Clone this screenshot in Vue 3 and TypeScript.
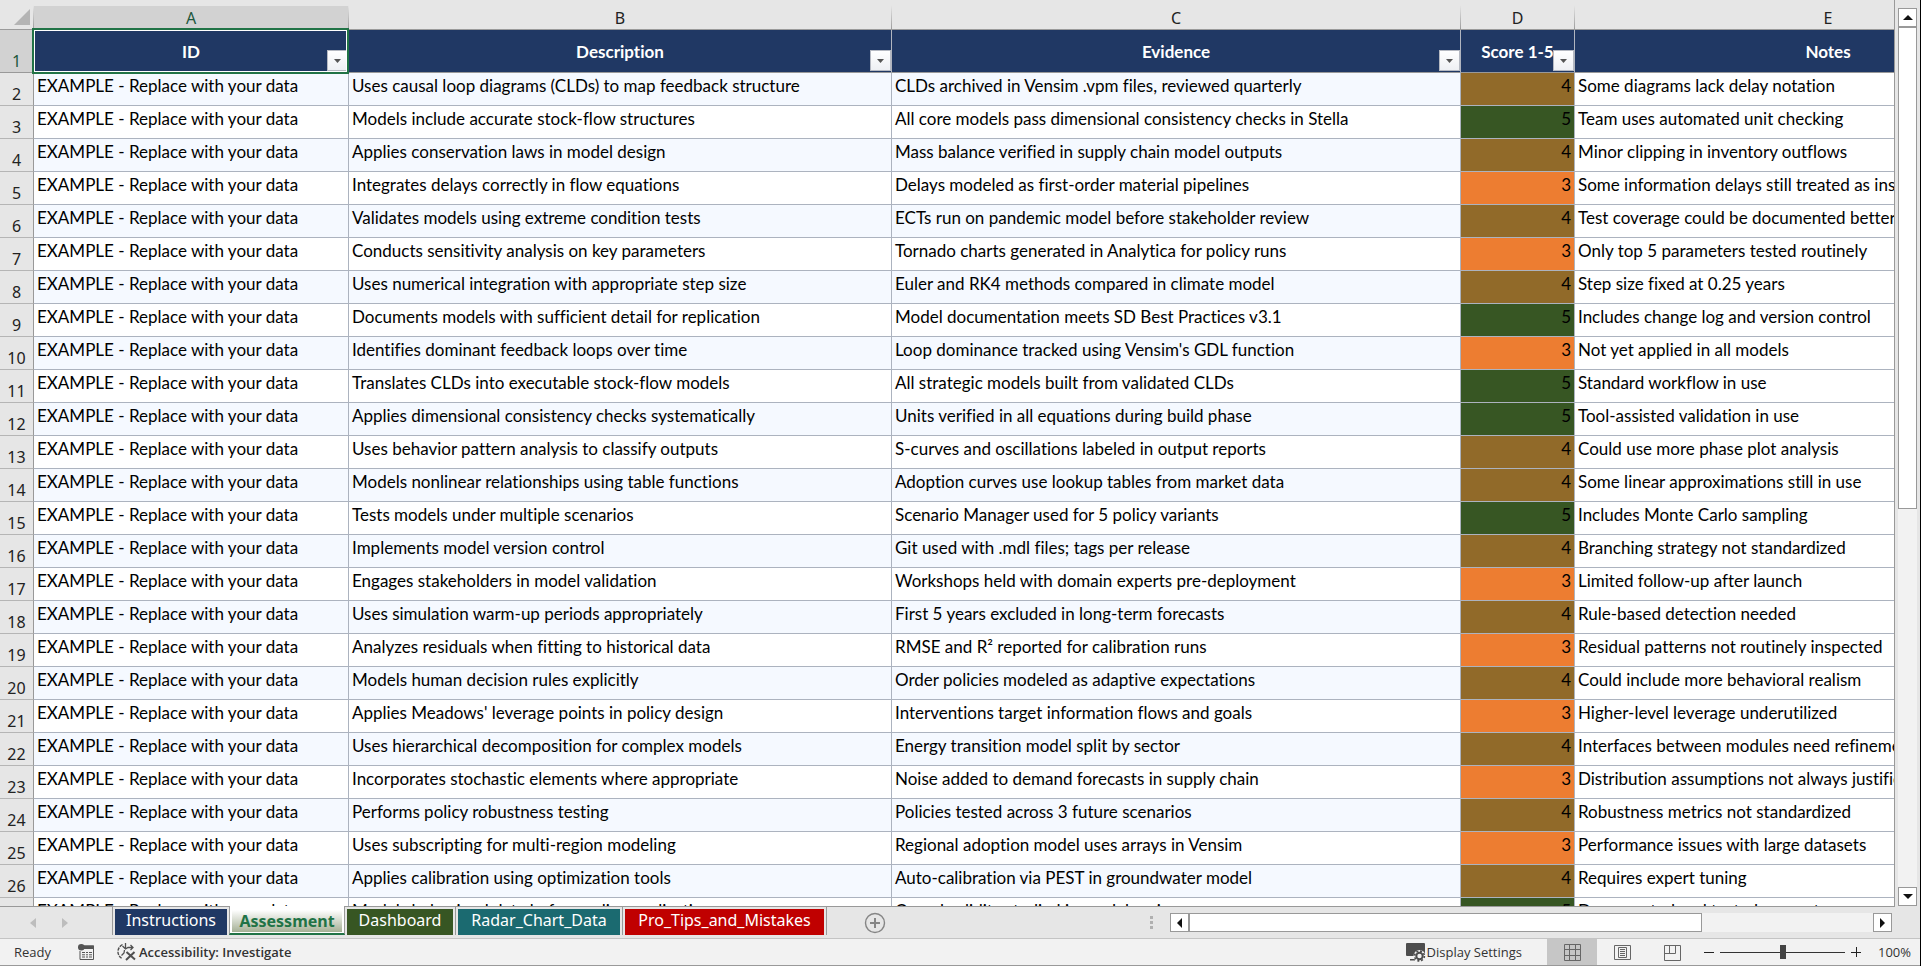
<script setup lang="ts">
interface Row {
  description: string
  evidence: string
  score: number
  notes: string
}

const columns = [
  { letter: 'A', title: 'ID', key: 'a', filter: true },
  { letter: 'B', title: 'Description', key: 'b', filter: true },
  { letter: 'C', title: 'Evidence', key: 'c', filter: true },
  { letter: 'D', title: 'Score 1-5', key: 'd', filter: true },
  { letter: 'E', title: 'Notes', key: 'e', filter: false },
]

const entries: [string, string, number, string][] = [
  ['Uses causal loop diagrams (CLDs) to map feedback structure', 'CLDs archived in Vensim .vpm files, reviewed quarterly', 4, 'Some diagrams lack delay notation'],
  ['Models include accurate stock-flow structures', 'All core models pass dimensional consistency checks in Stella', 5, 'Team uses automated unit checking'],
  ['Applies conservation laws in model design', 'Mass balance verified in supply chain model outputs', 4, 'Minor clipping in inventory outflows'],
  ['Integrates delays correctly in flow equations', 'Delays modeled as first-order material pipelines', 3, 'Some information delays still treated as instantaneous'],
  ['Validates models using extreme condition tests', 'ECTs run on pandemic model before stakeholder review', 4, 'Test coverage could be documented better'],
  ['Conducts sensitivity analysis on key parameters', 'Tornado charts generated in Analytica for policy runs', 3, 'Only top 5 parameters tested routinely'],
  ['Uses numerical integration with appropriate step size', 'Euler and RK4 methods compared in climate model', 4, 'Step size fixed at 0.25 years'],
  ['Documents models with sufficient detail for replication', 'Model documentation meets SD Best Practices v3.1', 5, 'Includes change log and version control'],
  ['Identifies dominant feedback loops over time', "Loop dominance tracked using Vensim's GDL function", 3, 'Not yet applied in all models'],
  ['Translates CLDs into executable stock-flow models', 'All strategic models built from validated CLDs', 5, 'Standard workflow in use'],
  ['Applies dimensional consistency checks systematically', 'Units verified in all equations during build phase', 5, 'Tool-assisted validation in use'],
  ['Uses behavior pattern analysis to classify outputs', 'S-curves and oscillations labeled in output reports', 4, 'Could use more phase plot analysis'],
  ['Models nonlinear relationships using table functions', 'Adoption curves use lookup tables from market data', 4, 'Some linear approximations still in use'],
  ['Tests models under multiple scenarios', 'Scenario Manager used for 5 policy variants', 5, 'Includes Monte Carlo sampling'],
  ['Implements model version control', 'Git used with .mdl files; tags per release', 4, 'Branching strategy not standardized'],
  ['Engages stakeholders in model validation', 'Workshops held with domain experts pre-deployment', 3, 'Limited follow-up after launch'],
  ['Uses simulation warm-up periods appropriately', 'First 5 years excluded in long-term forecasts', 4, 'Rule-based detection needed'],
  ['Analyzes residuals when fitting to historical data', 'RMSE and R² reported for calibration runs', 3, 'Residual patterns not routinely inspected'],
  ['Models human decision rules explicitly', 'Order policies modeled as adaptive expectations', 4, 'Could include more behavioral realism'],
  ["Applies Meadows' leverage points in policy design", 'Interventions target information flows and goals', 3, 'Higher-level leverage underutilized'],
  ['Uses hierarchical decomposition for complex models', 'Energy transition model split by sector', 4, 'Interfaces between modules need refinement'],
  ['Incorporates stochastic elements where appropriate', 'Noise added to demand forecasts in supply chain', 3, 'Distribution assumptions not always justified'],
  ['Performs policy robustness testing', 'Policies tested across 3 future scenarios', 4, 'Robustness metrics not standardized'],
  ['Uses subscripting for multi-region modeling', 'Regional adoption model uses arrays in Vensim', 3, 'Performance issues with large datasets'],
  ['Applies calibration using optimization tools', 'Auto-calibration via PEST in groundwater model', 4, 'Requires expert tuning'],
  ['Models behavioral data before policy application', 'Causal validity studied in model reviews', 5, 'Documented and tested across teams'],
]

const rows: Row[] = entries.map(([description, evidence, score, notes]) => ({ description, evidence, score, notes }))

const tabs = [
  { name: 'Instructions', key: 'navy' },
  { name: 'Assessment', key: 'active' },
  { name: 'Dashboard', key: 'green' },
  { name: 'Radar_Chart_Data', key: 'teal' },
  { name: 'Pro_Tips_and_Mistakes', key: 'red' },
]
</script>

<template>
  <div class="app">
    <main class="workspace">
      <div class="sheet">
        <table class="grid">
          <colgroup>
            <col class="col-head" />
            <col v-for="c in columns" :key="c.key" :class="'col-' + c.key" />
          </colgroup>
          <thead>
            <tr class="letters">
              <th class="corner" aria-label="Select all">
                <svg width="16" height="16" viewBox="0 0 16 16"><path d="M16 0V16H0Z" fill="#b4b4b4" /></svg>
              </th>
              <th v-for="c in columns" :key="c.key" scope="col" :class="{ selected: c.key === 'a' }">{{ c.letter }}</th>
            </tr>
          </thead>
          <tbody>
            <tr class="titles">
              <th scope="row" class="num selected">1</th>
              <td v-for="c in columns" :key="c.key" :class="{ current: c.key === 'a' }">
                <span>{{ c.title }}</span>
                <button v-if="c.filter" type="button" class="filter" :aria-label="'Filter ' + c.title">
                  <svg width="7" height="4" viewBox="0 0 7 4"><path d="M0 0H7L3.5 4Z" fill="#555" /></svg>
                </button>
              </td>
            </tr>
            <tr v-for="(r, i) in rows" :key="i" class="entry" :class="{ tinted: i % 2 === 0 }">
              <th scope="row" class="num">{{ i + 2 }}</th>
              <td class="band">EXAMPLE - Replace with your data</td>
              <td class="band">{{ r.description }}</td>
              <td class="band">{{ r.evidence }}</td>
              <td class="score" :class="'score-' + r.score">{{ r.score }}</td>
              <td>{{ r.notes }}</td>
            </tr>
          </tbody>
        </table>
      </div>
      <div class="vscroll">
        <button type="button" class="arrow" aria-label="Scroll up">
          <svg width="10" height="5" viewBox="0 0 10 5"><path d="M5 0L10 5H0Z" fill="#111" /></svg>
        </button>
        <div class="vtrack"><div class="vthumb"></div></div>
        <button type="button" class="arrow" aria-label="Scroll down">
          <svg width="10" height="5" viewBox="0 0 10 5"><path d="M0 0H10L5 5Z" fill="#111" /></svg>
        </button>
      </div>
    </main>

    <nav class="tabbar">
      <div class="tabnav">
        <button type="button" aria-label="Previous sheet">
          <svg width="6" height="10" viewBox="0 0 6 10"><path d="M6 0V10L0 5Z" fill="#bdbdbd" /></svg>
        </button>
        <button type="button" aria-label="Next sheet">
          <svg width="6" height="10" viewBox="0 0 6 10"><path d="M0 0V10L6 5Z" fill="#bdbdbd" /></svg>
        </button>
      </div>
      <div class="tabs">
        <div v-for="t in tabs" :key="t.key" class="slot" :class="'slot-' + t.key">
          <button type="button" class="tab" :class="'tab-' + t.key">{{ t.name }}</button>
        </div>
      </div>
      <button type="button" class="add" aria-label="New sheet">
        <svg width="22" height="22" viewBox="0 0 22 22" fill="none" stroke="#858585">
          <circle cx="11" cy="11" r="9.5" stroke-width="1.4" />
          <path d="M6 11H16M11 6V16" stroke-width="2" />
        </svg>
      </button>
      <div class="grip"><i></i><i></i><i></i></div>
      <div class="hscroll">
        <button type="button" class="arrow" aria-label="Scroll left">
          <svg width="5" height="10" viewBox="0 0 5 10"><path d="M5 0V10L0 5Z" fill="#111" /></svg>
        </button>
        <div class="htrack"><div class="hthumb"></div></div>
        <button type="button" class="arrow" aria-label="Scroll right">
          <svg width="5" height="10" viewBox="0 0 5 10"><path d="M0 0V10L5 5Z" fill="#111" /></svg>
        </button>
      </div>
    </nav>

    <footer class="status">
      <span class="ready">Ready</span>
      <button type="button" class="macro" aria-label="Record macro">
        <svg width="16" height="16" viewBox="0 0 16 16">
          <path d="M5 2H15.5V15.5H2V7" fill="none" stroke="#555" />
          <path d="M6 1.5H16V5H6Z" fill="#555" />
          <circle cx="3.3" cy="3.3" r="3.3" fill="#555" />
          <path d="M4 8.5H7M8 8.5H10M11 8.5H14M4 10.8H7M8 10.8H10M11 10.8H14M4 13H7M8 13H10M11 13H14" stroke="#555" />
        </svg>
      </button>
      <button type="button" class="access">
        <svg width="19" height="18" viewBox="0 0 19 18" fill="none" stroke="#505050">
          <path d="M5.5 1.5C-.5 5-.5 12 5 15.5" stroke-width="1.4" stroke-dasharray="3.4 1" />
          <path d="M8.5 0V5M5.5 3L8.5 6L11 4.5H16M13.5 2L16 4.5L13.5 7M7.5 7L7 10L4.5 12.5" stroke-width="1.3" />
          <path d="M9.5 9L18 16.5M17.5 9L9 17" stroke-width="2" />
        </svg>
        <span>Accessibility: Investigate</span>
      </button>
      <span class="spacer"></span>
      <button type="button" class="display">
        <svg width="20" height="19" viewBox="0 0 20 19">
          <path d="M1 0H18Q19 0 19 1V13H1Q0 13 0 12V1Q0 0 1 0Z" fill="#4d4d4d" />
          <path d="M4 16H9V17.5H4Z" fill="#4d4d4d" />
          <circle cx="13.5" cy="13" r="6" fill="#f2f2f2" />
          <circle cx="13.5" cy="13" r="3.2" fill="none" stroke="#4d4d4d" stroke-width="2" />
          <circle cx="13.5" cy="13" r="4.9" fill="none" stroke="#4d4d4d" stroke-width="1.6" stroke-dasharray="2 1.85" />
        </svg>
        <span>Display Settings</span>
      </button>
      <div class="views">
        <button type="button" class="on" aria-label="Normal view">
          <svg width="17" height="17" viewBox="0 0 17 17" fill="none" stroke="#666"><path d="M.5 .5H16.5V16.5H.5ZM.5 5.5H16.5M.5 11.5H16.5M5.5 .5V16.5M11.5 .5V16.5" /></svg>
        </button>
        <button type="button" aria-label="Page layout view">
          <svg width="17" height="17" viewBox="0 0 17 17" fill="none" stroke="#666"><path d="M.5 1.5H16.5V15.5H.5ZM4.5 3.5H12.5V13.5H4.5ZM6 5.5H11M6 7.5H11M6 9.5H11M6 11.5H11" /></svg>
        </button>
        <button type="button" aria-label="Page break preview">
          <svg width="17" height="17" viewBox="0 0 17 17" fill="none" stroke="#666"><path d="M.5 1.5H16.5V16.5H.5ZM5.5 1.5V9.5M11.5 1.5V9.5M.5 9.5H11.5" /></svg>
        </button>
      </div>
      <button type="button" class="step" aria-label="Zoom out">
        <svg width="10" height="10" viewBox="0 0 10 10"><path d="M0 5.5H10" stroke="#222" /></svg>
      </button>
      <input class="zoom" type="range" min="10" max="190" value="100" aria-label="Zoom level" />
      <button type="button" class="step" aria-label="Zoom in">
        <svg width="10" height="10" viewBox="0 0 10 10"><path d="M0 5.5H10M5.5 0V10" stroke="#222" /></svg>
      </button>
      <span class="percent">100%</span>
    </footer>
  </div>
</template>

<style>
body {
  margin: 0;
}
</style>

<style scoped>
.app {
  display: flex;
  flex-direction: column;
  height: 100vh;
  box-sizing: border-box;
  border-right: 1px solid #000;
  background: #e6e6e6;
  color: #000;
  font-family: "Noto Sans", "Open Sans", sans-serif;
  overflow: hidden;
}
button {
  margin: 0;
  padding: 0;
  border: 0;
  background: none;
  font: inherit;
  color: inherit;
}
svg {
  display: block;
  flex: none;
}
.workspace {
  flex: 1;
  min-height: 0;
  display: flex;
}
.sheet {
  flex: 1;
  min-width: 0;
  overflow: hidden;
  border-right: 1px solid #999;
  border-bottom: 1px solid #999;
}
.grid {
  table-layout: fixed;
  width: 2082px;
  border-collapse: separate;
  border-spacing: 0;
}
.col-head { width: 34px; }
.col-a { width: 315px; }
.col-b { width: 543px; }
.col-c { width: 569px; }
.col-d { width: 114px; }
.col-e { width: 507px; }
th,
td {
  box-sizing: border-box;
  padding: 0;
  font-weight: 400;
}
.letters th {
  height: 30px;
  padding-top: 6px;
  border-bottom: 1px solid #999;
  border-right: 1px solid;
  border-image: linear-gradient(#e6e6e6 20%, #999 100%) 1;
  font-size: 16px;
  line-height: 22px;
  color: #222;
}
.letters .corner {
  padding: 4px 3px 0 14px;
}
.letters .selected {
  background: linear-gradient(#e6e6e6 6px, #d2d2d2 6px);
  color: #21573c;
}
.num {
  background: #e6e6e6;
  border-right: 1px solid #999;
  border-bottom: 1px solid #b5b5b5;
  font-size: 16px;
  line-height: 22px;
  vertical-align: bottom;
  color: #222;
}
.num.selected {
  background: #d2d2d2;
  color: #21573c;
  border-bottom-color: #999;
}
.titles td {
  position: relative;
  height: 43px;
  background: #203864;
  border-right: 1px solid #b0b5bf;
  border-bottom: 1px solid #999;
  color: #fff;
  text-align: center;
  font-family: Lato, sans-serif;
  font-size: 17px;
  font-weight: 700;
  font-variant-ligatures: none;
  line-height: 20px;
  padding-top: 2px;
}
.titles .current::after {
  content: "";
  position: absolute;
  inset: -2px -1px -2px -2px;
  border: 2px solid #217346;
  box-shadow: inset 0 0 0 1px #fff;
  pointer-events: none;
}
.filter {
  position: absolute;
  right: 0;
  bottom: 1px;
  width: 21px;
  height: 21px;
  box-sizing: border-box;
  display: flex;
  align-items: center;
  justify-content: center;
  border: 1px solid #b5b9c2;
  background: linear-gradient(#fff, #eef0f4);
}
.entry td {
  height: 33px;
  padding: 0 3px 6px;
  background: #fff;
  border-right: 1px solid #acb3bf;
  border-bottom: 1px solid #acb3bf;
  font-family: Lato, sans-serif;
  font-size: 17px;
  font-variant-ligatures: none;
  line-height: 20px;
  white-space: nowrap;
}
.tinted .band {
  background: #f5f9ff;
}
.entry .score {
  text-align: right;
}
.entry .score-3 { background: #ed7d31; }
.entry .score-4 { background: #916a29; }
.entry .score-5 { background: #375623; }
.arrow {
  width: 19px;
  height: 19px;
  flex: none;
  box-sizing: border-box;
  display: flex;
  align-items: center;
  justify-content: center;
  border: 1px solid #999;
  background: #fff;
}
.vscroll {
  flex: none;
  width: 19px;
  padding: 8px 3px 1px;
  display: flex;
  flex-direction: column;
}
.vtrack {
  flex: 1;
  background: #f2f2f2;
}
.vthumb {
  height: 56%;
  box-sizing: border-box;
  border: 1px solid #999;
  background: #fff;
}
.tabbar {
  flex: none;
  height: 32px;
  box-sizing: border-box;
  display: flex;
  align-items: flex-start;
  border-bottom: 1px solid #c4c4c4;
}
.tabnav {
  width: 113px;
  height: 28px;
  box-sizing: border-box;
  padding: 3px 0 0 30px;
  display: flex;
  align-items: center;
  gap: 26px;
  border-right: 1px solid #999;
}
.tabs {
  display: flex;
}
.slot {
  display: flex;
  height: 26px;
  padding: 2px 2px 0;
  border-right: 1px solid #999;
}
.tab {
  height: 26px;
  padding-bottom: 5px;
  color: #fff;
  font-size: 16px;
  line-height: 20px;
}
.slot-navy {
  border-right: 0;
}
.slot-active {
  height: 23px;
  margin-top: -1px;
  padding: 4px 2px 0;
  border-left: 1px solid #999;
  border-bottom: 2px solid #217346;
  background: #fff;
}
.tab-navy { width: 112px; background: #203864; }
.tab-active {
  width: 110px;
  height: 22px;
  padding: 0;
  background: linear-gradient(#fff, #a5b095);
  color: #217346;
  font-weight: 700;
}
.tab-green { width: 106px; background: #375623; }
.tab-teal { width: 162px; background: #1b6a70; }
.tab-red { width: 199px; background: #c00000; }
.add {
  margin: 5px 0 0 37px;
}
.grip {
  margin: 9px 17px 0 auto;
  display: grid;
  gap: 2px;
}
.grip i {
  width: 3px;
  height: 3px;
  background: #b0b0b0;
}
.hscroll {
  flex: none;
  width: 37.6%;
  margin: 6px 28px 0 0;
  display: flex;
}
.htrack {
  flex: 1;
  background: #f2f2f2;
}
.hthumb {
  width: 75%;
  height: 19px;
  box-sizing: border-box;
  border: 1px solid #999;
  background: #fff;
}
.status {
  flex: none;
  height: 27px;
  box-sizing: border-box;
  display: flex;
  align-items: center;
  background: #f2f2f2;
  border-bottom: 1px solid #999;
  font-family: "Open Sans", "Noto Sans", sans-serif;
  font-size: 13px;
  color: #333;
}
.ready { margin-left: 14px; }
.macro { margin-left: 27px; }
.access {
  margin-left: 23px;
  display: flex;
  align-items: center;
  gap: 3px;
  font-weight: 600;
}
.spacer { flex: 1; }
.display {
  display: flex;
  align-items: center;
  gap: 1px;
}
.views {
  display: flex;
  align-self: stretch;
  margin: 0 1px 0 25px;
}
.views button {
  width: 50px;
  display: flex;
  align-items: center;
  justify-content: center;
}
.views .on { background: #c6c6c6; }
.step { margin: 0 6px; }
.zoom {
  appearance: none;
  width: 125px;
  height: 16px;
  margin: 0;
  background: linear-gradient(#333, #333) center / 100% 1px no-repeat;
}
.zoom::-webkit-slider-thumb {
  appearance: none;
  width: 6px;
  height: 14px;
  background: #444;
}
.percent {
  width: 42px;
  margin-left: 11px;
}
</style>
